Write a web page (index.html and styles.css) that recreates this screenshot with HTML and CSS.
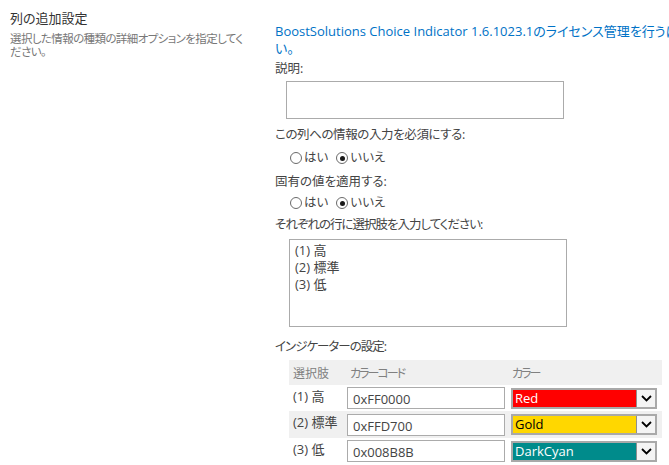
FILE: index.html
```html
<!DOCTYPE html>
<html lang="ja">
<head>
<meta charset="utf-8">
<title>列の追加設定</title>
<link rel="stylesheet" href="styles.css">
</head>
<body>
<div class="page">
  <div class="left">
    <div class="sec-title">列の追加設定</div>
    <div class="sec-desc">選択した情報の種類の詳細オプションを指定してください。</div>
  </div>
  <div class="right">
    <div class="notice"><span class="nl">BoostSolutions Choice Indicator 1.6.1023.1のライセンス管理を行うには、ここをクリックしてくださ</span><br>い。</div>
    <div class="label lbl-desc">説明:</div>
    <div class="textbox"></div>
    <div class="label lbl-req">この列への情報の入力を必須にする:</div>
    <div class="radios r1">
      <span class="radio"></span><span class="rtext">はい</span>
      <span class="radio checked"></span><span class="rtext">いいえ</span>
    </div>
    <div class="label lbl-uniq">固有の値を適用する:</div>
    <div class="radios r2">
      <span class="radio"></span><span class="rtext">はい</span>
      <span class="radio checked"></span><span class="rtext">いいえ</span>
    </div>
    <div class="label lbl-choices">それぞれの行に選択肢を入力してください:</div>
    <div class="textarea">
      <div>(1) 高</div>
      <div>(2) 標準</div>
      <div>(3) 低</div>
    </div>
    <div class="label lbl-ind">インジケーターの設定:</div>
    <div class="table">
      <div class="row head">
        <div class="c1">選択肢</div>
        <div class="c2 kana">カラーコード</div>
        <div class="c3 kana">カラー</div>
      </div>
      <div class="row">
        <div class="c1 name">(1) 高</div>
        <div class="c2"><div class="input">0xFF0000</div></div>
        <div class="c3"><div class="sel"><span class="val red">Red</span><span class="btn"><svg width="11" height="7" viewBox="0 0 11 7"><polyline points="1,1 5.5,5.5 10,1" fill="none" stroke="#000" stroke-width="1.8"/></svg></span></div></div>
      </div>
      <div class="row alt">
        <div class="c1 name">(2) 標準</div>
        <div class="c2"><div class="input">0xFFD700</div></div>
        <div class="c3"><div class="sel"><span class="val gold">Gold</span><span class="btn"><svg width="11" height="7" viewBox="0 0 11 7"><polyline points="1,1 5.5,5.5 10,1" fill="none" stroke="#000" stroke-width="1.8"/></svg></span></div></div>
      </div>
      <div class="row">
        <div class="c1 name">(3) 低</div>
        <div class="c2"><div class="input">0x008B8B</div></div>
        <div class="c3"><div class="sel"><span class="val cyan">DarkCyan</span><span class="btn"><svg width="11" height="7" viewBox="0 0 11 7"><polyline points="1,1 5.5,5.5 10,1" fill="none" stroke="#000" stroke-width="1.8"/></svg></span></div></div>
      </div>
    </div>
  </div>
</div>
</body>
</html>
```
FILE: styles.css
```css
html, body {
  margin: 0;
  padding: 0;
  background: #fff;
  overflow: hidden;
}
body {
  font-family: "Open Sans", "Noto Sans CJK JP", sans-serif;
  font-feature-settings: "palt";
  font-size: 13px;
  color: #444;
  width: 669px;
  height: 465px;
}
.page {
  display: flex;
  align-items: flex-start;
}
.left {
  width: 265px;
  padding: 9px 0 0 10px;
  flex: none;
}
.sec-title {
  font-size: 13px;
  line-height: 18px;
  color: #333;
}
.sec-desc {
  margin-top: 5px;
  font-size: 11.5px;
  letter-spacing: -0.6px;
  line-height: 13px;
  color: #777;
  width: 240px;
}
.right {
  flex: none;
  width: 394px;
  padding-top: 23px;
  white-space: nowrap;
}
.notice {
  color: #0072c6;
  line-height: 17px;
  width: 394px;
  height: 34px;
}
.label {
  line-height: 16px;
  font-size: 12.5px;
  color: #444;
}
.lbl-desc { margin-top: 4px; }
.textbox {
  margin: 4px 0 0 11px;
  width: 278px;
  height: 38px;
  box-sizing: border-box;
  border: 1px solid #ababab;
}
.lbl-req { margin-top: 8px; letter-spacing: -0.4px; }
.radios {
  display: flex;
  align-items: center;
  height: 16px;
  margin-left: 15px;
  color: #444;
  font-size: 12.5px;
}
.r1 { margin-top: 7px; }
.lbl-uniq { margin-top: 8px; }
.r2 { margin-top: 5px; }
.lbl-choices { margin-top: 6px; letter-spacing: -1px; }
.radio {
  width: 12px;
  height: 12px;
  box-sizing: border-box;
  border: 1px solid #6a6a6a;
  border-radius: 50%;
  background: #fff;
  position: relative;
  flex: none;
}
.radio.checked::after {
  content: "";
  position: absolute;
  left: 2.5px;
  top: 2.5px;
  width: 5px;
  height: 5px;
  border-radius: 50%;
  background: #1a1a1a;
}
.rtext {
  margin: 0 8px 0 2px;
  line-height: 16px;
}
.textarea {
  margin: 6px 0 0 14px;
  width: 278px;
  height: 88px;
  box-sizing: border-box;
  border: 1px solid #ababab;
  padding: 2px 0 0 5px;
  line-height: 17px;
  color: #444;
}
.lbl-ind { margin-top: 12px; letter-spacing: -1px; }
.table {
  margin: 5px 0 0 14px;
  width: 373px;
}
.row {
  display: grid;
  grid-template-columns: 56px 163px 154px;
  align-items: center;
  height: 26px;
}
.row.head {
  height: 25px;
  background: #f0f0f0;
  color: #808080;
  font-size: 12px;
}
.head .kana { letter-spacing: -2px; }
.row.alt {
  background: #f0f0f0;
  height: 27px;
}
.head .c1 { padding-left: 4px; }
.head .c2 { padding-left: 5px; }
.head .c3 { padding-left: 4px; }
.name {
  padding-left: 4px;
  color: #444;
  align-self: start;
  padding-top: 3px;
  line-height: 16px;
}
.c2 { padding-left: 2px; }
.input {
  width: 158px;
  height: 22px;
  box-sizing: border-box;
  border: 1px solid #ababab;
  background: #fff;
  padding: 2px 0 0 5px;
  line-height: 18px;
  color: #444;
}
.c3 { padding-left: 3px; }
.sel {
  display: flex;
  width: 146px;
  height: 21px;
  box-sizing: border-box;
  border: 2px solid #a9a9a9;
}
.val {
  flex: 1;
  padding-left: 2px;
  line-height: 17px;
}
.red { background: #ff0000; color: #fff; }
.gold { background: #ffd700; color: #000; }
.cyan { background: #008b8b; color: #fff; }
.btn {
  width: 18px;
  flex: none;
  background: #f4f4f4;
  border-left: 1px solid #8f8f8f;
  display: flex;
  align-items: center;
  justify-content: center;
}
```
